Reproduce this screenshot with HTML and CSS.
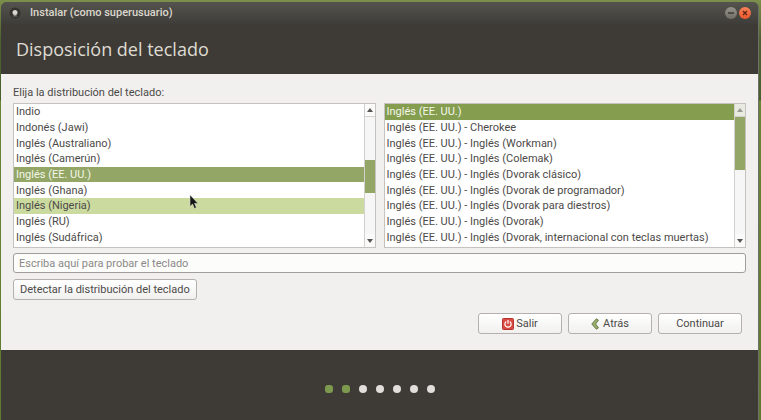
FILE: index.html
```html
<!DOCTYPE html>
<html lang="es">
<head>
<meta charset="utf-8">
<title>Instalar (como superusuario)</title>
<link rel="stylesheet" href="styles.css">
</head>
<body>
<div class="window">
  <header class="titlebar">
    <svg class="app-icon" viewBox="0 0 12 12" aria-hidden="true"><circle cx="6" cy="6" r="5.5" fill="#34332f"/><circle cx="6" cy="5.6" r="2.5" fill="#d8d4ce"/><path d="M3.5 9.2Q6 7.4 8.5 9.2z" fill="#b5b1ab"/></svg>
    <span class="window-title">Instalar (como superusuario)</span>
    <button class="win-btn" type="button" aria-label="Minimizar"><svg viewBox="0 0 12 12"><path d="M3 6h6" stroke="#3b3935" stroke-width="1.3"/></svg></button>
    <button class="win-btn close" type="button" aria-label="Cerrar"><svg viewBox="0 0 12 12"><path d="M4 4l4 4M8 4l-4 4" stroke="#5b2414" stroke-width="1.3"/></svg></button>
  </header>
  <div class="heading"><h1>Disposición del teclado</h1></div>
  <main class="content">
    <p class="prompt" id="prompt">Elija la distribución del teclado:</p>
    <div class="lists">
      <div class="listbox">
        <ul class="options" role="listbox" aria-labelledby="prompt" tabindex="0">
          <li role="option">Indio</li>
          <li role="option">Indonés (Jawi)</li>
          <li role="option">Inglés (Australiano)</li>
          <li role="option">Inglés (Camerún)</li>
          <li role="option" class="selected" aria-selected="true">Inglés (EE. UU.)</li>
          <li role="option">Inglés (Ghana)</li>
          <li role="option" class="hovered">Inglés (Nigeria)</li>
          <li role="option">Inglés (RU)</li>
          <li role="option">Inglés (Sudáfrica)</li>
        </ul>
        <div class="scrollbar">
          <button type="button" class="step" aria-label="Subir"><svg viewBox="0 0 6 4"><path d="M0 4L3 0l3 4z"/></svg></button>
          <div class="track layouts"><div class="thumb"></div></div>
          <button type="button" class="step" aria-label="Bajar"><svg viewBox="0 0 6 4"><path d="M0 0h6L3 4z"/></svg></button>
        </div>
        <svg class="pointer" viewBox="0 0 10 16" aria-hidden="true"><path d="M1 1v11.5l2.6-2.4 1.8 4.4 2-.9-1.9-4.2H9z" fill="#151515" stroke="#d5dccb" stroke-width=".6"/></svg>
      </div>
      <div class="listbox">
        <ul class="options" role="listbox" aria-labelledby="prompt" tabindex="0">
          <li role="option" class="selected active" aria-selected="true">Inglés (EE. UU.)</li>
          <li role="option">Inglés (EE. UU.) - Cherokee</li>
          <li role="option">Inglés (EE. UU.) - Inglés (Workman)</li>
          <li role="option">Inglés (EE. UU.) - Inglés (Colemak)</li>
          <li role="option">Inglés (EE. UU.) - Inglés (Dvorak clásico)</li>
          <li role="option">Inglés (EE. UU.) - Inglés (Dvorak de programador)</li>
          <li role="option">Inglés (EE. UU.) - Inglés (Dvorak para diestros)</li>
          <li role="option">Inglés (EE. UU.) - Inglés (Dvorak)</li>
          <li role="option">Inglés (EE. UU.) - Inglés (Dvorak, internacional con teclas muertas)</li>
        </ul>
        <div class="scrollbar">
          <button type="button" class="step" disabled aria-label="Subir"><svg viewBox="0 0 6 4"><path d="M0 4L3 0l3 4z"/></svg></button>
          <div class="track variants"><div class="thumb"></div></div>
          <button type="button" class="step" aria-label="Bajar"><svg viewBox="0 0 6 4"><path d="M0 0h6L3 4z"/></svg></button>
        </div>
      </div>
    </div>
    <input class="test" type="text" placeholder="Escriba aquí para probar el teclado" aria-label="Escriba aquí para probar el teclado">
    <button class="btn detect" type="button">Detectar la distribución del teclado</button>
    <div class="actions">
      <button class="btn" type="button"><svg class="quit" viewBox="0 0 12 12"><rect x=".5" y=".5" width="11" height="11" rx="1" fill="#d94a42" stroke="#b5332e"/><path d="M4.2 3.6a3.1 3.1 0 1 0 3.6 0M6 2v3.8" fill="none" stroke="#fff" stroke-width="1.2"/></svg>Salir</button>
      <button class="btn" type="button"><svg class="back" viewBox="0 0 8 12"><path d="M5.3 .8L.8 6l4.5 5.2 2.2-1.4L4.6 6l2.9-3.8z" fill="#9aae70" stroke="#5f7440" stroke-width=".9"/></svg>Atrás</button>
      <button class="btn" type="button">Continuar</button>
    </div>
  </main>
  <footer class="progress" aria-label="Paso 2 de 7">
    <span class="dot done"></span><span class="dot done"></span><span class="dot"></span><span class="dot"></span><span class="dot"></span><span class="dot"></span><span class="dot"></span>
  </footer>
</div>
</body>
</html>
```
FILE: styles.css
```css
* { box-sizing: border-box; }

body {
  margin: 0;
  padding: 2px 2px 0 1px;
  min-height: 100vh;
  display: flex;
  background: linear-gradient(to bottom, #7d8f4c 0, #4e6130 40px, #48602c 100px, #6a8435 101px, #61792f 100%);
  font: 11px/16px Roboto, "Noto Sans", sans-serif;
  color: #4c4a48;
}

button, input { font: inherit; color: inherit; }

.window {
  flex: 1;
  display: flex;
  flex-direction: column;
  border-right: 1px solid #6e706a;
  border-radius: 6px 6px 0 0;
  background: #3e3b37;
  overflow: hidden;
}

.titlebar {
  display: flex;
  align-items: center;
  height: 22px;
  padding: 0 7px 0 8px;
  background: linear-gradient(#55534d, #3f3d39);
  color: #dbd7ce;
  font-weight: 500;
}

.app-icon { width: 12px; height: 12px; margin-right: 9px; }
.window-title { flex: 1; }

.win-btn {
  display: flex;
  width: 12px;
  height: 12px;
  margin-left: 2px;
  padding: 0;
  border: 0;
  border-radius: 50%;
  background: linear-gradient(#96938c, #706d67);
}
.win-btn.close { background: linear-gradient(#f98258, #e9562b); }
.win-btn svg { width: 12px; height: 12px; }

.heading {
  height: 50px;
  display: flex;
  align-items: center;
  padding: 0 15px;
  color: #dfdbd2;
}
.heading h1 { margin: 0; font: 400 18px/24px "Open Sans", "Noto Sans", sans-serif; }

.content {
  display: flex;
  flex-direction: column;
  padding: 11px 12px 16px;
  background: #f2f0ef;
}

.prompt { margin: 0 0 2px; }

.lists {
  display: grid;
  grid-template-columns: 1fr 1fr;
  gap: 8px;
}

.listbox {
  position: relative;
  display: flex;
  height: 145px;
  border: 1px solid #c5c2bf;
  background: #fff;
}

.options {
  flex: 1;
  min-width: 0;
  display: grid;
  grid-auto-rows: 1fr;
  margin: 0;
  padding: 0 0 2px;
  list-style: none;
  outline: 0;
}
.options li {
  display: flex;
  align-items: center;
  min-height: 0;
  padding: 1px 2px 0;
  line-height: 14px;
  white-space: nowrap;
}
.options .selected { background: #93a665; color: #f4f7ea; }
.options .active { background: #849d4f; }
.options .hovered { background: #cbdba0; }

.scrollbar {
  width: 11px;
  display: flex;
  flex-direction: column;
  border-left: 1px solid #d3d0ce;
  background: #f7f6f6;
}
.step {
  display: flex;
  align-items: center;
  justify-content: center;
  height: 13px;
  padding: 0;
  border: 0;
  background: #fafafa;
  fill: #585654;
}
.step:first-child { border-bottom: 1px solid #d3d0ce; }
.step:disabled { background: #e9ebe0; fill: #9a9b92; }
.step svg { width: 6px; height: 4px; }

.track { flex: 1; display: grid; }
.layouts { grid-template-rows: 43fr 33fr 41fr; }
.variants { grid-template-rows: 0fr 53fr 64fr; }
.thumb { grid-row: 2; background: #93a665; }

.pointer {
  position: absolute;
  left: 175px;
  top: 90px;
  width: 10px;
  height: 16px;
}

.test {
  width: 100%;
  height: 20px;
  margin-top: 5px;
  padding: 0 5px;
  border: 1px solid #a09e9b;
  border-radius: 3px;
  background: #fcfcfb;
}
.test::placeholder { color: #8b8987; opacity: 1; }

.btn {
  display: flex;
  align-items: center;
  justify-content: center;
  height: 21px;
  padding: 0 6px;
  border: 1px solid #b3b0ad;
  border-radius: 3px;
  background: linear-gradient(#fff, #f1f0ef);
  white-space: nowrap;
}
.detect { align-self: flex-start; margin-top: 6px; }

.actions {
  display: flex;
  justify-content: flex-end;
  gap: 6px;
  margin: 13px 4px 0 0;
}
.actions .btn { width: 84px; }
.quit { width: 12px; height: 12px; margin-right: 2px; }
.back { width: 8px; height: 12px; margin-right: 4px; }

.progress {
  flex: 1;
  display: flex;
  align-items: center;
  justify-content: center;
  gap: 9px;
  padding-top: 7px;
}
.dot { width: 8px; height: 8px; border-radius: 50%; background: #e2dedb; }
.done { border-radius: 3px; background: #7d9a4e; }
```
